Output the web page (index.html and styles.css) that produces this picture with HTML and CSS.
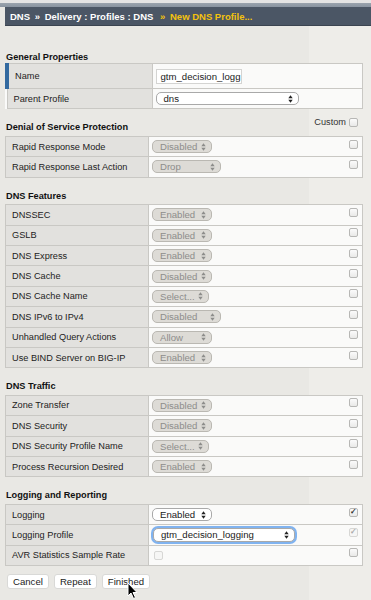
FILE: index.html
```html
<!DOCTYPE html>
<html lang="en">
<head>
    <meta charset="UTF-8">
    <title>New DNS Profile</title>
    <link rel="stylesheet" href="styles.css">
</head>
<body>
    <div class="topstrip"></div>
    <div class="crumbs">
        <span>DNS</span> <span class="sep">&raquo;</span> <span>Delivery : Profiles : DNS</span>
        <span class="current"><span class="sep">&raquo;</span> New DNS Profile...</span>
    </div>

    <div class="content">
        <!-- General Properties -->
        <div class="section-title lead">General Properties</div>
        <table class="props first">
            <tr class="tall">
                <td class="label marked">Name</td>
                <td class="value"><span class="textbox">gtm_decision_logg</span></td>
            </tr>
            <tr>
                <td class="label">Parent Profile</td>
                <td class="value"><span class="pill on wide">dns<svg class="arr" viewBox="0 0 5 8"><path d="M0.3 3.3 L2.5 0.3 L4.7 3.3Z M0.3 4.7 L2.5 7.7 L4.7 4.7Z"/></svg></span></td>
            </tr>
        </table>

        <!-- Denial of Service Protection -->
        <div class="section-title split">
            <span>Denial of Service Protection</span>
            <span class="custom">Custom <span class="box"></span></span>
        </div>
        <table class="props">
            <tr>
                <td class="label">Rapid Response Mode</td>
                <td class="value"><div class="cell"><span class="pill">Disabled<svg class="arr" viewBox="0 0 5 8"><path d="M0.3 3.3 L2.5 0.3 L4.7 3.3Z M0.3 4.7 L2.5 7.7 L4.7 4.7Z"/></svg></span><span class="box"></span></div></td>
            </tr>
            <tr>
                <td class="label">Rapid Response Last Action</td>
                <td class="value"><div class="cell"><span class="pill w68">Drop<svg class="arr" viewBox="0 0 5 8"><path d="M0.3 3.3 L2.5 0.3 L4.7 3.3Z M0.3 4.7 L2.5 7.7 L4.7 4.7Z"/></svg></span><span class="box"></span></div></td>
            </tr>
        </table>

        <!-- DNS Features -->
        <div class="section-title">DNS Features</div>
        <table class="props">
            <tr>
                <td class="label">DNSSEC</td>
                <td class="value"><div class="cell"><span class="pill">Enabled<svg class="arr" viewBox="0 0 5 8"><path d="M0.3 3.3 L2.5 0.3 L4.7 3.3Z M0.3 4.7 L2.5 7.7 L4.7 4.7Z"/></svg></span><span class="box"></span></div></td>
            </tr>
            <tr>
                <td class="label">GSLB</td>
                <td class="value"><div class="cell"><span class="pill">Enabled<svg class="arr" viewBox="0 0 5 8"><path d="M0.3 3.3 L2.5 0.3 L4.7 3.3Z M0.3 4.7 L2.5 7.7 L4.7 4.7Z"/></svg></span><span class="box"></span></div></td>
            </tr>
            <tr>
                <td class="label">DNS Express</td>
                <td class="value"><div class="cell"><span class="pill">Enabled<svg class="arr" viewBox="0 0 5 8"><path d="M0.3 3.3 L2.5 0.3 L4.7 3.3Z M0.3 4.7 L2.5 7.7 L4.7 4.7Z"/></svg></span><span class="box"></span></div></td>
            </tr>
            <tr>
                <td class="label">DNS Cache</td>
                <td class="value"><div class="cell"><span class="pill">Disabled<svg class="arr" viewBox="0 0 5 8"><path d="M0.3 3.3 L2.5 0.3 L4.7 3.3Z M0.3 4.7 L2.5 7.7 L4.7 4.7Z"/></svg></span><span class="box"></span></div></td>
            </tr>
            <tr>
                <td class="label">DNS Cache Name</td>
                <td class="value"><div class="cell"><span class="pill w56">Select...<svg class="arr" viewBox="0 0 5 8"><path d="M0.3 3.3 L2.5 0.3 L4.7 3.3Z M0.3 4.7 L2.5 7.7 L4.7 4.7Z"/></svg></span><span class="box"></span></div></td>
            </tr>
            <tr>
                <td class="label">DNS IPv6 to IPv4</td>
                <td class="value"><div class="cell"><span class="pill w68">Disabled<svg class="arr" viewBox="0 0 5 8"><path d="M0.3 3.3 L2.5 0.3 L4.7 3.3Z M0.3 4.7 L2.5 7.7 L4.7 4.7Z"/></svg></span><span class="box"></span></div></td>
            </tr>
            <tr>
                <td class="label">Unhandled Query Actions</td>
                <td class="value"><div class="cell"><span class="pill">Allow<svg class="arr" viewBox="0 0 5 8"><path d="M0.3 3.3 L2.5 0.3 L4.7 3.3Z M0.3 4.7 L2.5 7.7 L4.7 4.7Z"/></svg></span><span class="box"></span></div></td>
            </tr>
            <tr>
                <td class="label">Use BIND Server on BIG-IP</td>
                <td class="value"><div class="cell"><span class="pill">Enabled<svg class="arr" viewBox="0 0 5 8"><path d="M0.3 3.3 L2.5 0.3 L4.7 3.3Z M0.3 4.7 L2.5 7.7 L4.7 4.7Z"/></svg></span><span class="box"></span></div></td>
            </tr>
        </table>

        <!-- DNS Traffic -->
        <div class="section-title">DNS Traffic</div>
        <table class="props">
            <tr>
                <td class="label">Zone Transfer</td>
                <td class="value"><div class="cell"><span class="pill">Disabled<svg class="arr" viewBox="0 0 5 8"><path d="M0.3 3.3 L2.5 0.3 L4.7 3.3Z M0.3 4.7 L2.5 7.7 L4.7 4.7Z"/></svg></span><span class="box"></span></div></td>
            </tr>
            <tr>
                <td class="label">DNS Security</td>
                <td class="value"><div class="cell"><span class="pill">Disabled<svg class="arr" viewBox="0 0 5 8"><path d="M0.3 3.3 L2.5 0.3 L4.7 3.3Z M0.3 4.7 L2.5 7.7 L4.7 4.7Z"/></svg></span><span class="box"></span></div></td>
            </tr>
            <tr>
                <td class="label">DNS Security Profile Name</td>
                <td class="value"><div class="cell"><span class="pill w56">Select...<svg class="arr" viewBox="0 0 5 8"><path d="M0.3 3.3 L2.5 0.3 L4.7 3.3Z M0.3 4.7 L2.5 7.7 L4.7 4.7Z"/></svg></span><span class="box"></span></div></td>
            </tr>
            <tr>
                <td class="label">Process Recursion Desired</td>
                <td class="value"><div class="cell"><span class="pill">Enabled<svg class="arr" viewBox="0 0 5 8"><path d="M0.3 3.3 L2.5 0.3 L4.7 3.3Z M0.3 4.7 L2.5 7.7 L4.7 4.7Z"/></svg></span><span class="box"></span></div></td>
            </tr>
        </table>

        <!-- Logging and Reporting -->
        <div class="section-title">Logging and Reporting</div>
        <table class="props">
            <tr>
                <td class="label">Logging</td>
                <td class="value"><div class="cell"><span class="pill on">Enabled<svg class="arr" viewBox="0 0 5 8"><path d="M0.3 3.3 L2.5 0.3 L4.7 3.3Z M0.3 4.7 L2.5 7.7 L4.7 4.7Z"/></svg></span><span class="box checked">&#10003;</span></div></td>
            </tr>
            <tr>
                <td class="label">Logging Profile</td>
                <td class="value"><div class="cell"><span class="pill on focus">gtm_decision_logging<svg class="arr" viewBox="0 0 5 8"><path d="M0.3 3.3 L2.5 0.3 L4.7 3.3Z M0.3 4.7 L2.5 7.7 L4.7 4.7Z"/></svg></span><span class="box checked dim">&#10003;</span></div></td>
            </tr>
            <tr>
                <td class="label">AVR Statistics Sample Rate</td>
                <td class="value"><div class="cell"><span class="box small dim"></span><span class="box"></span></div></td>
            </tr>
        </table>

        <div class="buttons">
            <button>Cancel</button>
            <button>Repeat</button>
            <button>Finished</button>
        </div>
    </div>

    <svg class="pointer" width="12" height="18" viewBox="0 0 12 18">
        <path d="M1 1 L1 14 L4 11 L6.5 16.5 L8.5 15.5 L6 10.5 L10 10.5 Z" fill="#000" stroke="#fff" stroke-width="1"/>
    </svg>
</body>
</html>
```

FILE: styles.css
```css
* {
    box-sizing: border-box;
}

body {
    margin: 0;
    position: relative;
    min-height: 600px;
    font-family: "Liberation Sans", Arial, sans-serif;
    font-size: 9.2px;
    color: #222;
    background: linear-gradient(90deg, #e9e8e4 0, #e9e8e4 309px, #eeede9 309px);
}

.topstrip {
    height: 7px;
    background: linear-gradient(180deg, #e4e4e4 0, #e4e4e4 3px, #9aa3ad 3px, #8994a1 7px);
}

.crumbs {
    margin-left: 5px;
    height: 19px;
    padding: 4px 0 0 5px;
    background: #4b5665;
    border-bottom: 1px solid #3b4450;
    color: #fff;
    font-weight: bold;
    font-size: 9.5px;
    white-space: nowrap;
}

.crumbs .sep {
    padding: 0 2px;
}

.crumbs .current {
    color: #f4c20d;
    margin-left: 2px;
}

.content {
    padding: 26px 8px 0 5px;
}

.section-title {
    font-weight: bold;
    color: #111;
    padding: 0 0 2.5px 1px;
    height: 13.5px;
    line-height: 11px;
}

.section-title.lead {
    height: 11px;
    padding-bottom: 0;
}

.section-title.split {
    display: flex;
    justify-content: space-between;
    align-items: flex-start;
    margin-top: 1.5px;
}

.custom {
    font-weight: normal;
    color: #333;
    display: flex;
    align-items: center;
    gap: 3px;
    margin-right: 5px;
    position: relative;
    top: -5px;
}

.props {
    width: 358px;
    border-collapse: collapse;
    margin-bottom: 13px;
    background: #fafaf9;
}

.props td {
    border: 1px solid #c9c8c4;
    height: 20.4px;
    padding: 0;
    vertical-align: middle;
}

.props .label {
    width: 143px;
    background: #e2e1de;
    padding-left: 6px;
    color: #222;
}

.props .label.marked {
    border-left: 4px solid #336aa0;
    padding-left: 6px;
}

.props.first .label {
    width: 145px;
}

.props tr.tall td {
    height: 25px;
}

.props .value {
    padding: 0 4px 0 3px;
}

.cell {
    display: flex;
    align-items: center;
    justify-content: space-between;
}

.textbox {
    display: inline-block;
    width: 86px;
    height: 15px;
    padding: 1px 4px;
    background: #fff;
    border: 1px solid #d4d4d2;
    color: #222;
    font-size: 9.6px;
}

.pill {
    display: inline-flex;
    align-items: center;
    justify-content: space-between;
    width: 60px;
    height: 13px;
    padding: 0 5px 0 7px;
    border: 1px solid #bab8b2;
    border-radius: 5px;
    background: #dddbd6;
    color: #8d8d8b;
    line-height: 11px;
    font-size: 9.6px;
}

.pill.w68 { width: 69px; }
.pill.w56 { width: 57px; }

.pill.on {
    background: #fff;
    border-color: #a9a9a9;
    color: #1a1a1a;
}

.pill.wide {
    width: 143px;
}

.pill.focus {
    width: 142px;
    height: 14px;
    box-shadow: 0 0 0 2px #80b3f0;
    margin-left: 1px;
}

.arr {
    width: 5px;
    height: 8px;
    fill: #8d8d8b;
}

.pill.on .arr {
    fill: #222;
}

.box {
    display: inline-flex;
    align-items: center;
    justify-content: center;
    width: 9px;
    height: 9px;
    border: 1px solid #b7b7b5;
    border-radius: 2px;
    background: linear-gradient(#fbfbfb, #e9e9e8);
    font-size: 8px;
    line-height: 1;
    color: #333;
    margin-top: -5px;
}

.box.checked {
    font-weight: bold;
}

.box.dim {
    border-color: #d7d7d5;
    color: #aaa;
    background: #f6f6f5;
}

.box.small {
    margin-left: 2px;
    margin-top: 0;
}

.custom .box {
    margin-top: 0;
}

.buttons {
    display: flex;
    gap: 5px;
    margin-top: -5.5px;
    padding-left: 2px;
}

.buttons button {
    height: 15px;
    padding: 0 5px;
    border: 1px solid #d9d9d7;
    border-radius: 3px;
    background: #fff;
    font-family: "Liberation Sans", Arial, sans-serif;
    font-size: 9.6px;
    color: #222;
}

.pointer {
    position: absolute;
    left: 127px;
    top: 582px;
}
```
